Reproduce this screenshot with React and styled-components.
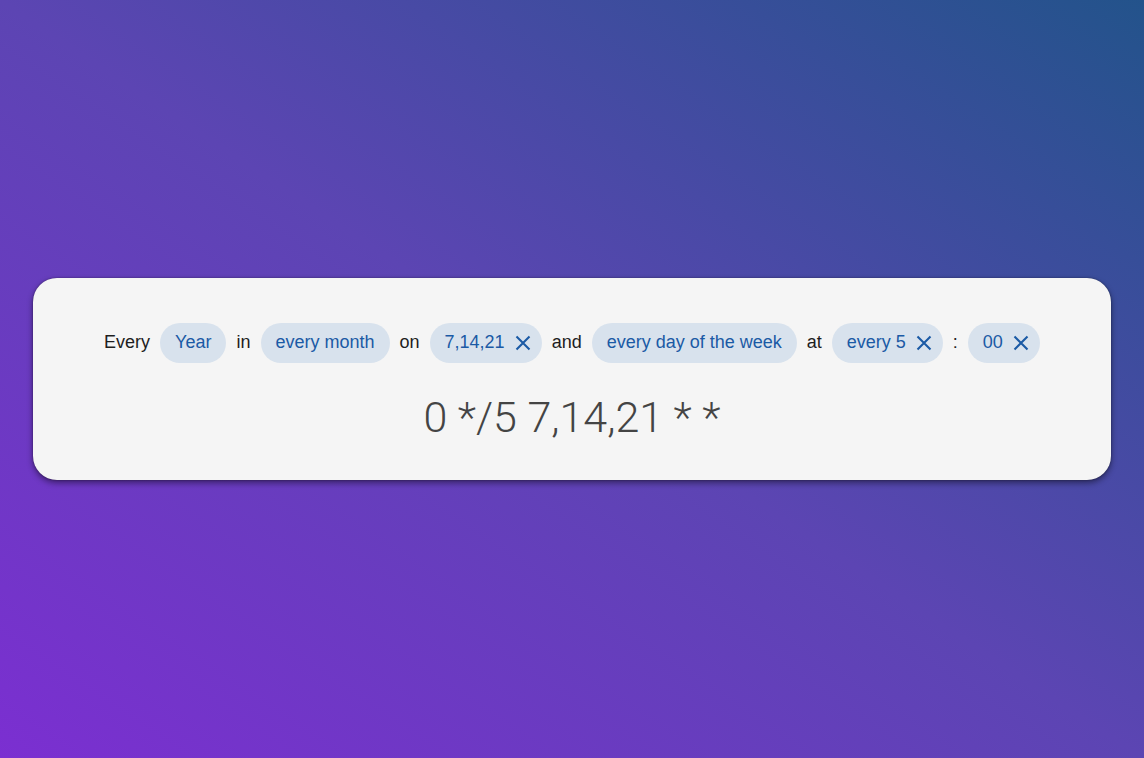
import React from "react";
import styled, { createGlobalStyle } from "styled-components";

const Global = createGlobalStyle`
  html, body { margin: 0; padding: 0; height: 100%; }
  body { font-family: "Liberation Sans", Arial, sans-serif; }
  #root { height: 100%; }
`;

const Page = styled.div`
  width: 100vw;
  height: 100vh;
  box-sizing: border-box;
  background: linear-gradient(to top right, #7b2fd1 0%, #5c45b3 50%, #23538b 100%);
  display: flex;
  align-items: center;
  justify-content: center;
  padding: 0 33px;
`;

const Card = styled.div`
  flex: 1;
  background: #f5f5f5;
  border-radius: 24px;
  box-shadow: 0 3px 6px rgba(0, 0, 0, 0.45), 0 0 2px rgba(0, 0, 0, 0.4);
  padding: 45px 20px 37px;
  display: flex;
  flex-direction: column;
  align-items: center;
  gap: 29px;
`;

const Row = styled.div`
  display: flex;
  align-items: center;
  justify-content: center;
  gap: 10px;
`;

const Word = styled.span`
  font-size: 18px;
  color: #1e1e1e;
`;

const Chip = styled.div`
  height: 40px;
  box-sizing: border-box;
  border-radius: 20px;
  background: #d8e2ed;
  color: #1b5aa5;
  display: flex;
  align-items: center;
  gap: 10px;
  padding: 0 ${(p) => (p.$closable ? "11px" : "15px")} 0 15px;
  font-size: 18px;
`;

const CloseIcon = styled.svg`
  width: 16px;
  height: 16px;
  display: block;
`;

const Cron = styled.div`
  font-family: Roboto, "Liberation Sans", sans-serif;
  font-weight: 300;
  font-size: 43px;
  color: #444;
  line-height: 1.2;
`;

const X = () => (
  <CloseIcon viewBox="0 0 16 16">
    <path d="M1.5 1.5 L14.5 14.5 M14.5 1.5 L1.5 14.5" stroke="#1b5aa5" strokeWidth="2.1" />
  </CloseIcon>
);

export default function App() {
  return (
    <>
      <Global />
      <Page>
        <Card>
          <Row>
            <Word>Every</Word>
            <Chip>Year</Chip>
            <Word>in</Word>
            <Chip>every month</Chip>
            <Word>on</Word>
            <Chip $closable>
              7,14,21 <X />
            </Chip>
            <Word>and</Word>
            <Chip>every day of the week</Chip>
            <Word>at</Word>
            <Chip $closable>
              every 5 <X />
            </Chip>
            <Word>:</Word>
            <Chip $closable>
              00 <X />
            </Chip>
          </Row>
          <Cron>0 */5 7,14,21 * *</Cron>
        </Card>
      </Page>
    </>
  );
}
